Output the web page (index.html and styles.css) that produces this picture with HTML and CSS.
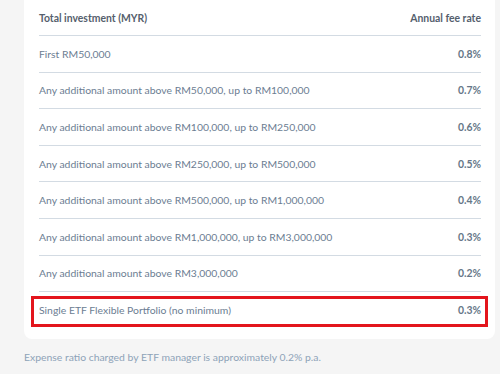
FILE: index.html
```html
<!DOCTYPE html>
<html>
<head>
<meta charset="utf-8">
<link rel="stylesheet" href="styles.css">
</head>
<body>
<div class="page">
  <div class="card">
    <div class="row head">
      <span>Total investment (MYR)</span>
      <span>Annual fee rate</span>
    </div>
    <div class="row"><span>First RM50,000</span><span class="val">0.8%</span></div>
    <div class="row"><span>Any additional amount above RM50,000, up to RM100,000</span><span class="val">0.7%</span></div>
    <div class="row"><span>Any additional amount above RM100,000, up to RM250,000</span><span class="val">0.6%</span></div>
    <div class="row"><span>Any additional amount above RM250,000, up to RM500,000</span><span class="val">0.5%</span></div>
    <div class="row"><span>Any additional amount above RM500,000, up to RM1,000,000</span><span class="val">0.4%</span></div>
    <div class="row"><span>Any additional amount above RM1,000,000, up to RM3,000,000</span><span class="val">0.3%</span></div>
    <div class="row"><span>Any additional amount above RM3,000,000</span><span class="val">0.2%</span></div>
    <div class="row last highlight"><span>Single ETF Flexible Portfolio (no minimum)</span><span class="val">0.3%</span></div>
  </div>
  <p class="note">Expense ratio charged by ETF manager is approximately 0.2% p.a.</p>
</div>
</body>
</html>
```

FILE: styles.css
```css
html, body {
  margin: 0;
  padding: 0;
  background: #f5f5f5;
}
body {
  font-family: Lato, "Noto Sans", sans-serif;
  font-size: 10.4px;
  color: #6b7d92;
}
.page {
  width: 471px;
  padding-left: 24px;
}
.card {
  background: #ffffff;
  border-radius: 0 0 8px 8px;
  padding: 0 14px 10px 15px;
}
.row {
  display: flex;
  justify-content: space-between;
  align-items: center;
  border-bottom: 1px solid #d3dbe3;
  box-sizing: border-box;
  height: 36.6px;
}
.row.head {
  font-weight: 700;
  color: #55606d;
  height: 36px;
}
.val {
  font-weight: 700;
  color: #667788;
}
.row.last {
  border-bottom: none;
}
.highlight {
  position: relative;
}
.highlight::after {
  content: "";
  position: absolute;
  left: -8px;
  right: -7px;
  top: 4px;
  bottom: 2px;
  border: 3px solid #e3151d;
}
.note {
  margin: 12px 0 0 0;
  color: #8ea3b8;
  font-size: 10.4px;
}
```
